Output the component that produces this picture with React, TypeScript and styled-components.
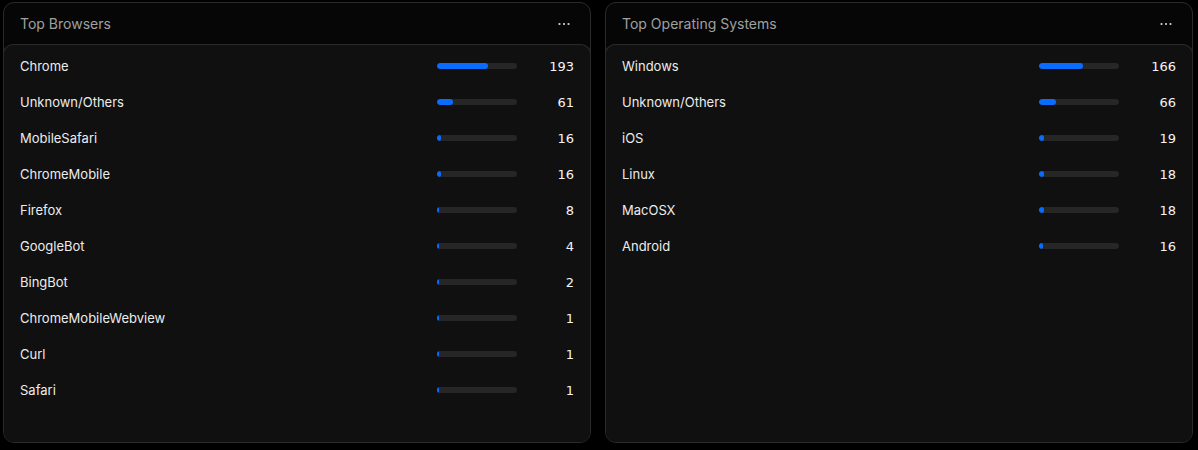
import React from "react";
import styled, { createGlobalStyle } from "styled-components";

const Global = createGlobalStyle`
  html, body { margin: 0; padding: 0; background: #000; }
  body { font-family: Inter, "Noto Sans", sans-serif; }
`;

const Page = styled.div`
  display: grid;
  grid-template-columns: 1fr 1fr;
  gap: 14px;
  padding: 2px 5px 0 3px;
  height: 450px;
  box-sizing: border-box;
  background: #000;
`;

const Card = styled.section`
  height: 441px;
  box-sizing: border-box;
  border: 1px solid #2a2a2a;
  border-radius: 11px;
  background: #060606;
  display: flex;
  flex-direction: column;
  overflow: hidden;
`;

const Header = styled.header`
  height: 41px;
  flex: none;
  display: flex;
  align-items: center;
  justify-content: space-between;
  padding: 0 16px;
`;

const Title = styled.h2`
  margin: 0;
  font-size: 14px;
  font-weight: 400;
  color: #a0a0a0;
  letter-spacing: 0;
`;

const MenuButton = styled.button`
  border: none;
  background: none;
  padding: 0;
  display: flex;
  align-items: center;
  cursor: pointer;
  margin-right: 4px;
`;

const Body = styled.div`
  flex: 1;
  background: #101010;
  border-top: 1px solid #2a2a2a;
  border-radius: 10px 10px 0 0;
  margin: 0 -1px;
  border-left: 1px solid #2a2a2a;
  border-right: 1px solid #2a2a2a;
  padding: 3px 0 0;
`;

const Row = styled.div`
  height: 36px;
  display: flex;
  align-items: center;
  padding: 0 16px;
`;

const Label = styled.span`
  flex: 1;
  font-size: 13px;
  color: #ececec;
`;

const Track = styled.div`
  width: 80px;
  height: 6px;
  border-radius: 3px;
  background: #262626;
  overflow: hidden;
`;

const Fill = styled.div`
  height: 100%;
  border-radius: 3px;
  background: #0a6cff;
`;

const Count = styled.span`
  width: 40px;
  margin-left: 17px;
  text-align: right;
  font-family: "DejaVu Sans", sans-serif;
  font-size: 13px;
  color: #f4f4f4;
`;

type Item = { name: string; value: number };

const browsers: Item[] = [
  { name: "Chrome", value: 193 },
  { name: "Unknown/Others", value: 61 },
  { name: "MobileSafari", value: 16 },
  { name: "ChromeMobile", value: 16 },
  { name: "Firefox", value: 8 },
  { name: "GoogleBot", value: 4 },
  { name: "BingBot", value: 2 },
  { name: "ChromeMobileWebview", value: 1 },
  { name: "Curl", value: 1 },
  { name: "Safari", value: 1 },
];

const systems: Item[] = [
  { name: "Windows", value: 166 },
  { name: "Unknown/Others", value: 66 },
  { name: "iOS", value: 19 },
  { name: "Linux", value: 18 },
  { name: "MacOSX", value: 18 },
  { name: "Android", value: 16 },
];

const Dots = () => (
  <svg width="12" height="4" viewBox="0 0 12 4">
    <circle cx="1.5" cy="2" r="1.1" fill="#d8d8d8" />
    <circle cx="6" cy="2" r="1.1" fill="#d8d8d8" />
    <circle cx="10.5" cy="2" r="1.1" fill="#d8d8d8" />
  </svg>
);

const Panel = ({ title, items }: { title: string; items: Item[] }) => {
  const total = items.reduce((s, i) => s + i.value, 0);
  return (
    <Card>
      <Header>
        <Title>{title}</Title>
        <MenuButton aria-label="More">
          <Dots />
        </MenuButton>
      </Header>
      <Body>
        {items.map((it) => (
          <Row key={it.name}>
            <Label>{it.name}</Label>
            <Track>
              <Fill style={{ width: `${Math.max((it.value / total) * 80, 1.5)}px` }} />
            </Track>
            <Count>{it.value}</Count>
          </Row>
        ))}
      </Body>
    </Card>
  );
};

export default function App() {
  return (
    <>
      <Global />
      <Page>
        <Panel title="Top Browsers" items={browsers} />
        <Panel title="Top Operating Systems" items={systems} />
      </Page>
    </>
  );
}
